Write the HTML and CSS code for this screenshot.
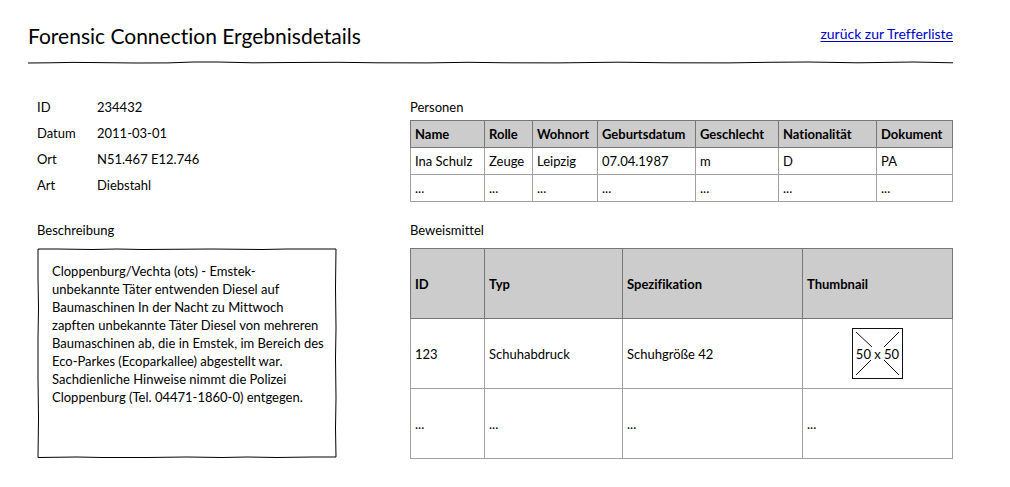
FILE: index.html
```html
<!DOCTYPE html>
<html lang="de">
<head>
<meta charset="utf-8">
<title>Forensic Connection Ergebnisdetails</title>
<link rel="stylesheet" href="styles.css">
</head>
<body>
<div class="page">
  <header class="header">
    <h1 class="title">Forensic Connection Ergebnisdetails</h1>
    <a class="back" href="#">zurück zur Trefferliste</a>
  </header>
  <svg class="rule" viewBox="0 0 925 4" preserveAspectRatio="none" aria-hidden="true">
    <path d="M0 3L22 2.800L45 2.400L70 2.600L108 3L140 2.900L166 2L190 2L225 2.800L262 2.500L310 2.300L350 2.800L400 2.900L440 2.300L480 2.800L530 2.900L590 2.200L640 2.800L700 2.900L740 2.300L780 2L830 2.800L885 2L925 2.800"/>
  </svg>
  <main class="content">
    <dl class="facts">
      <dt>ID</dt><dd>234432</dd>
      <dt>Datum</dt><dd>2011-03-01</dd>
      <dt>Ort</dt><dd>N51.467 E12.746</dd>
      <dt>Art</dt><dd>Diebstahl</dd>
    </dl>
    <section class="persons">
      <h2 class="label">Personen</h2>
      <table class="table">
        <colgroup><col class="p-name"><col class="p-role"><col class="p-city"><col class="p-birth"><col class="p-sex"><col class="p-nation"><col class="p-doc"></colgroup>
        <thead><tr><th>Name</th><th>Rolle</th><th>Wohnort</th><th>Geburtsdatum</th><th>Geschlecht</th><th>Nationalität</th><th>Dokument</th></tr></thead>
        <tbody>
          <tr><td>Ina Schulz</td><td>Zeuge</td><td>Leipzig</td><td>07.04.1987</td><td>m</td><td>D</td><td>PA</td></tr>
          <tr><td>...</td><td>...</td><td>...</td><td>...</td><td>...</td><td>...</td><td>...</td></tr>
        </tbody>
      </table>
    </section>
    <section class="description">
      <h2 class="label">Beschreibung</h2>
      <div class="sheet">
        <svg class="outline" viewBox="0 0 300 211" preserveAspectRatio="none" aria-hidden="true">
          <path d="M1 1L20 1L55 1.500L80 1L105 1.500L150 1.200L175 1L225 1.500L250 1L299 1L298.500 40L299 80L298.500 110L299 150L298.500 180L299 209L275 209L240 209.500L210 209L185 209.500L150 209L110 209.500L65 209.500L40 209L1 209.500L1.500 170L1 130L1 90L1.500 60L1 30Z"/>
        </svg>
        <p class="text">Cloppenburg/Vechta (ots) - Emstek-<br>unbekannte Täter entwenden Diesel auf<br>Baumaschinen In der Nacht zu Mittwoch<br>zapften unbekannte Täter Diesel von mehreren<br>Baumaschinen ab, die in Emstek, im Bereich des<br>Eco-Parkes (Ecoparkallee) abgestellt war.<br>Sachdienliche Hinweise nimmt die Polizei<br>Cloppenburg (Tel. 04471-1860-0) entgegen.</p>
      </div>
    </section>
    <section class="evidence">
      <h2 class="label">Beweismittel</h2>
      <table class="table tall">
        <colgroup><col class="e-id"><col class="e-type"><col class="e-spec"><col class="e-thumb"></colgroup>
        <thead><tr><th>ID</th><th>Typ</th><th>Spezifikation</th><th>Thumbnail</th></tr></thead>
        <tbody>
          <tr><td>123</td><td>Schuhabdruck</td><td>Schuhgröße 42</td><td class="picture">
            <div class="thumb">
              <svg class="cross" viewBox="0 0 49 49" aria-hidden="true"><path d="M3 3L19 18M46 3L31 18M3 46L18 31M46 46L31 31"/></svg>
              <span class="size">50 x 50</span>
            </div>
          </td></tr>
          <tr><td>...</td><td>...</td><td>...</td><td>...</td></tr>
        </tbody>
      </table>
    </section>
  </main>
</div>
</body>
</html>
```
FILE: styles.css
```css
* { box-sizing: border-box; }
body {
  margin: 0;
  background: #fff;
  color: #000;
  font: 13px/18px Lato, "Liberation Sans", sans-serif;
  font-variant-ligatures: none;
}
.page { padding: 22px 57px 29px 28px; }
.header {
  display: flex;
  justify-content: space-between;
  align-items: flex-start;
}
.title { margin: 0; font-size: 21px; line-height: 28px; font-weight: 400; }
.back { margin-top: 3px; font-size: 14px; color: #0000c8; text-underline-offset: 2px; }
.rule { display: block; width: 100%; height: 4px; margin-top: 10px; }
.rule path, .outline path { fill: none; stroke: #000; vector-effect: non-scaling-stroke; }
.content {
  display: grid;
  grid-template-columns: minmax(0, 300fr) minmax(0, 543fr);
  column-gap: 73px;
  row-gap: 19px;
  padding: 34px 0 0 9px;
}
.facts {
  display: grid;
  grid-template-columns: 60px 1fr;
  row-gap: 8px;
  align-content: start;
  margin: 0;
}
.facts dd { margin: 0; }
.label { margin: 0 0 4px; font-size: 13px; line-height: 18px; font-weight: 400; }
.description, .evidence { display: flex; flex-direction: column; }
.description .label, .evidence .label { margin-bottom: 9px; }
.sheet { display: grid; flex: 1; }
.outline, .text { grid-area: 1 / 1; }
.outline { width: 100%; height: 100%; min-height: 0; contain: size; }
.text {
  margin: 0;
  padding: 14px 12px 14px 15px;
  white-space: nowrap;
}
.table { width: 100%; table-layout: fixed; border-collapse: collapse; }
.table tr { height: 27px; }
.tall tr { height: 70px; }
.table th, .table td {
  padding: 0 0 0 4px;
  border: 1px solid #a0a0a0;
  text-align: left;
  vertical-align: middle;
  white-space: nowrap;
}
.table th { background: #ccc; border-color: #777; font-weight: 700; }
.p-name, .e-id { width: 74px; }
.p-role { width: 48px; }
.p-city { width: 65px; }
.p-birth, .p-nation { width: 98px; }
.p-sex { width: 83px; }
.e-type { width: 138px; }
.e-spec { width: 180px; }
.table .picture { padding: 0; }
.thumb {
  display: grid;
  place-items: center;
  width: 51px;
  height: 51px;
  margin: 0 auto;
  border: 1px solid #111;
}
.cross, .size { grid-area: 1 / 1; }
.cross { width: 49px; height: 49px; }
.cross path { fill: none; stroke: #111; stroke-width: 1; }
```
